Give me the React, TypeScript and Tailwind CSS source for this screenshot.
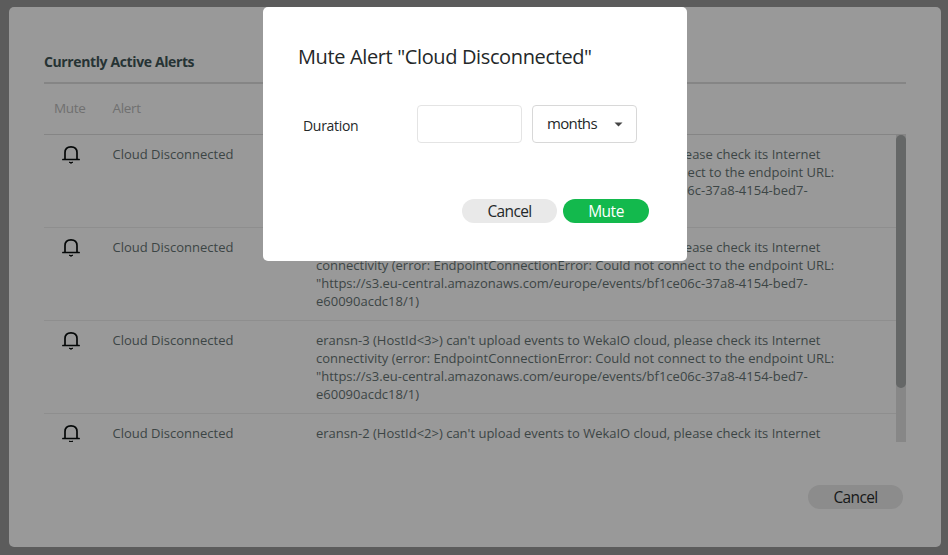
import React from 'react';

const sans = "font-['Open_Sans','Noto_Sans',sans-serif]";

const alerts = [
  { host: 5, lines: 4 },
  { host: 4, lines: 4 },
  { host: 3, lines: 4 },
  { host: 2, lines: 1 },
];

const details = [
  'connectivity (error: EndpointConnectionError: Could not connect to the endpoint URL:',
  '"https://s3.eu-central.amazonaws.com/europe/events/bf1ce06c-37a8-4154-bed7-',
  'e60090acdc18/1)',
];

function Bell() {
  return (
    <svg width="18" height="20" viewBox="0 0 18 20" fill="none" className="block shrink-0">
      <path d="M0.9 14.5H17.1" stroke="#050808" strokeWidth="1.7" strokeLinecap="round" />
      <path d="M3 14V7.6C3 3.8 5.4 1.8 9 1.8S15 3.8 15 7.6V14" stroke="#050808" strokeWidth="1.7" />
      <path d="M7.1 17.2Q9 19.4 10.9 17.2Q9 17.9 7.1 17.2Z" fill="#050808" stroke="#050808" strokeWidth="0.9" strokeLinejoin="round" />
    </svg>
  );
}

function AlertRow({ host, lines }: { host: number; lines: number }) {
  return (
    <div className="flex h-[93px] shrink-0 border-b border-[#8e8e8e] pt-[10px] text-[13px] leading-[18px] text-[#3c4545]">
      <div className="w-[68.5px] shrink-0 pl-[18px]">
        <Bell />
      </div>
      <div className="w-[203.5px] shrink-0">Cloud Disconnected</div>
      <div className="whitespace-nowrap">
        <p>
          eransn-{host} (HostId&lt;{host}&gt;) can't upload events to WekaIO cloud, please check its Internet
        </p>
        {details.slice(0, lines - 1).map((line) => (
          <p key={line}>{line}</p>
        ))}
      </div>
    </div>
  );
}

function MuteDialog() {
  return (
    <div className="absolute left-[263px] top-[7px] flex h-[254px] w-[424px] flex-col rounded-[5px] bg-white text-[#242829]">
      <h2 className="ml-[35px] mt-[34px] h-8 whitespace-nowrap text-[20px] leading-8 tracking-[-0.37px]">
        Mute Alert "Cloud Disconnected"
      </h2>
      <div className="ml-10 mt-8 flex h-[38px]">
        <label className="w-[114px] pt-[11px] text-[14px] leading-5 tracking-[-0.3px]">Duration</label>
        <div className="h-[38px] w-[105px] rounded-[4px] border border-[#e4e4e4]" />
        <div className="ml-[10px] flex h-[38px] w-[105px] items-center justify-between rounded-[4px] border border-[#d8d8d8] pl-[14px] pr-[13px] text-[15px]">
          <span className="-mt-[2px] tracking-[-0.65px]">months</span>
          <svg width="9" height="5" viewBox="0 0 9 5">
            <path d="M0.5 0.5H8.5L4.5 4.5Z" fill="#444" />
          </svg>
        </div>
      </div>
      <div className="mr-[38px] mt-14 flex justify-end gap-[6px] text-[15.5px] leading-6">
        <button className="h-6 w-[95px] rounded-full bg-[#e9e9e9] tracking-[-0.65px]">Cancel</button>
        <button className="h-6 w-[86px] rounded-full bg-[#13b94d] tracking-[-0.5px] text-white">Mute</button>
      </div>
    </div>
  );
}

export default function App() {
  return (
    <div className={`relative h-[555px] w-[948px] overflow-hidden bg-[#5c5c5c] pl-[9px] pt-[7px] ${sans}`}>
      <div className="flex h-[540px] w-[932px] flex-col rounded-[5px] bg-[#999999] pl-[35px] pr-[35px]">
        <h1 className="h-[77px] shrink-0 border-b-2 border-[#858585] pt-[45px] text-[14px] font-bold leading-5 tracking-[-0.38px] text-[#263334]">
          Currently Active Alerts
        </h1>
        <div className="flex h-[51px] shrink-0 border-b border-[#858585] pl-[10px] pt-[14px] text-[13.5px] leading-5 tracking-[-0.3px] text-[#707070]">
          <div className="w-[58.5px]">Mute</div>
          <div>Alert</div>
        </div>
        <div className="flex h-[307px] shrink-0">
          <div className="flex w-[852px] flex-col overflow-hidden">
            {alerts.map((a) => (
              <AlertRow key={a.host} host={a.host} lines={a.lines} />
            ))}
          </div>
          <div className="w-[10px] bg-[#878787]">
            <div className="h-[253px] rounded-[5px] bg-[#656767]" />
          </div>
        </div>
        <div className="flex justify-end pr-[3px] pt-[43px]">
          <button className="h-6 w-[95px] rounded-full bg-[#8c8c8c] text-[15.5px] leading-6 tracking-[-0.65px] text-[#161819]">
            Cancel
          </button>
        </div>
      </div>
      <MuteDialog />
    </div>
  );
}
